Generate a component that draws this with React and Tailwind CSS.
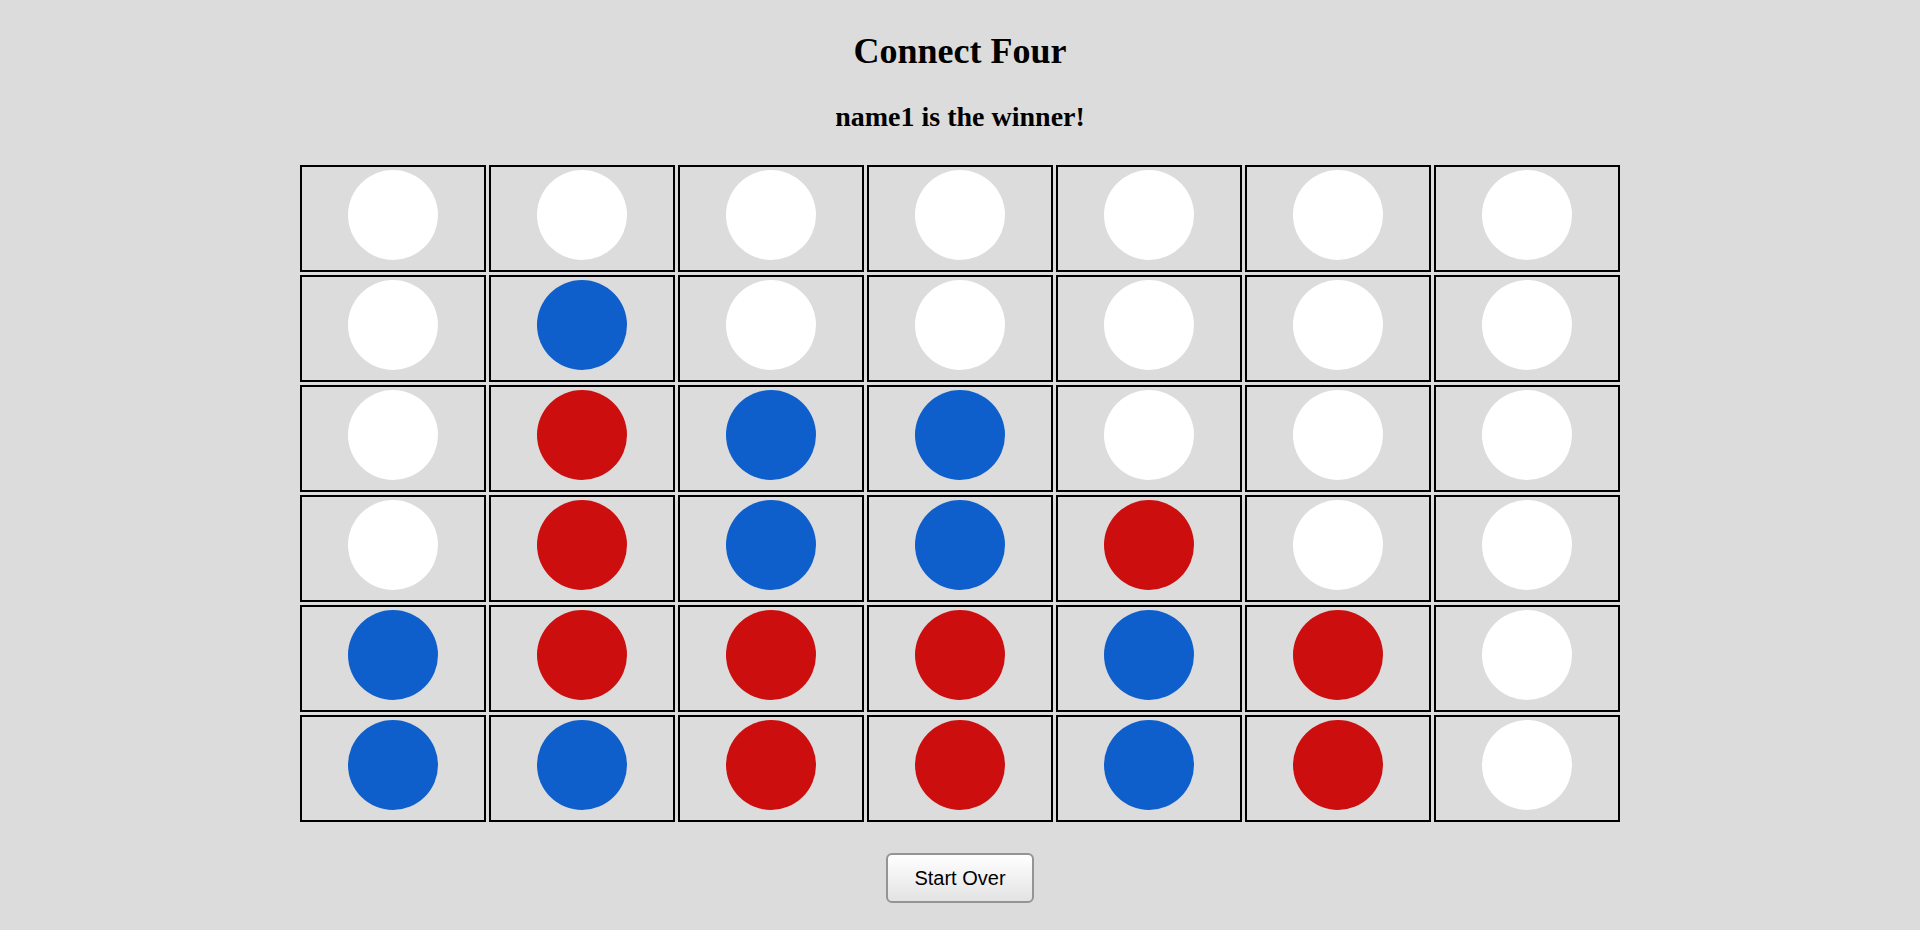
import React from "react";

const B = "b", R = "r", W = "w";
const board = [
  [W, W, W, W, W, W, W],
  [W, B, W, W, W, W, W],
  [W, R, B, B, W, W, W],
  [W, R, B, B, R, W, W],
  [B, R, R, R, B, R, W],
  [B, B, R, R, B, R, W],
];

function Disc({ c }) {
  if (c === B) return <div className="w-[90px] h-[90px] rounded-full bg-[#0e5ecc]" />;
  if (c === R) return <div className="w-[90px] h-[90px] rounded-full bg-[#cc0e0e]" />;
  return <div className="w-[90px] h-[90px] rounded-full bg-white" />;
}

export default function App() {
  return (
    <div className="min-h-[930px] w-full bg-[#dcdcdc] flex flex-col items-center pt-[31px]" style={{ fontFamily: '"Liberation Serif", "Times New Roman", serif' }}>
      <h2 className="text-[36px] leading-[40px] font-bold text-black">Connect Four</h2>
      <h3 className="mt-[30px] text-[28px] leading-[31px] font-bold text-black">name1 is the winner!</h3>
      <div className="mt-[33px] w-[1321px] flex flex-col gap-[3px]">
        {board.map((row, i) => (
          <div key={i} className="flex gap-[3px]">
            {row.map((c, j) => (
              <div key={j} className="flex-1 h-[107px] box-border border-2 border-black flex justify-center pt-[3px]">
                <Disc c={c} />
              </div>
            ))}
          </div>
        ))}
      </div>
      <button
        className="mt-[31px] w-[148px] h-[50px] rounded-[6px] border-2 border-[#949494] bg-gradient-to-b from-white to-[#e3e3e3] text-[20px] text-black"
        style={{ fontFamily: '"Liberation Sans", Arial, sans-serif' }}
      >
        Start Over
      </button>
    </div>
  );
}
